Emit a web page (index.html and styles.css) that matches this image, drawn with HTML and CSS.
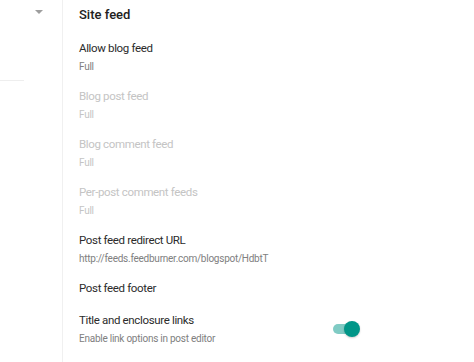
FILE: index.html
```html
<!DOCTYPE html>
<html lang="en">
<head>
    <meta charset="UTF-8">
    <meta name="viewport" content="width=device-width, initial-scale=1.0">
    <title>Settings - Site feed</title>
    <link rel="stylesheet" href="styles.css">
</head>
<body>

<div class="layout">
    <div class="sidebar">
        <div class="nav-head">
            <span class="caret"></span>
        </div>
        <div class="nav-rule"></div>
    </div>

    <div class="content">
        <h2 class="section-title">Site feed</h2>

        <div class="setting">
            <div class="label">Allow blog feed</div>
            <div class="value">Full</div>
        </div>

        <div class="setting disabled">
            <div class="label">Blog post feed</div>
            <div class="value">Full</div>
        </div>

        <div class="setting disabled">
            <div class="label">Blog comment feed</div>
            <div class="value">Full</div>
        </div>

        <div class="setting disabled">
            <div class="label">Per-post comment feeds</div>
            <div class="value">Full</div>
        </div>

        <div class="setting">
            <div class="label">Post feed redirect URL</div>
            <div class="value">http://feeds.feedburner.com/blogspot/HdbtT</div>
        </div>

        <div class="setting single">
            <div class="label">Post feed footer</div>
        </div>

        <div class="setting row">
            <div>
                <div class="label">Title and enclosure links</div>
                <div class="value">Enable link options in post editor</div>
            </div>
            <div class="toggle on"><span class="knob"></span></div>
        </div>
    </div>
</div>

</body>
</html>
```

FILE: styles.css
```css
body { margin: 0; font-family: Roboto, "Noto Sans", Arial, sans-serif; background: #fff; color: #212121; }
.layout { display: flex; height: 362px; overflow: hidden; }
.sidebar { width: 62px; border-right: 1px solid #f0f0f0; flex-shrink: 0; }
.nav-head { height: 24px; display: flex; justify-content: flex-end; align-items: center; padding-right: 19px; }
.caret { width: 0; height: 0; border-left: 4px solid transparent; border-right: 4px solid transparent; border-top: 4px solid #9e9e9e; }
.nav-rule { margin-top: 56px; width: 24px; border-top: 1px solid #eeeeee; }
.content { padding-left: 16px; width: 280px; }
.section-title { font-size: 13px; font-weight: 500; margin: 0; padding-top: 5px; line-height: 20px; margin-bottom: 13px; }
.setting { padding-bottom: 10px; }
.setting.single { padding-bottom: 12px; }
.label { font-size: 11.5px; letter-spacing: -0.35px; line-height: 20px; color: #2b2b2b; }
.value { font-size: 10px; letter-spacing: -0.25px; line-height: 18px; color: #808080; }
.disabled .label, .disabled .value { color: #c4c4c4; }
.row { display: flex; justify-content: space-between; align-items: center; }
.toggle { position: relative; width: 24px; height: 10px; border-radius: 5px; background: #80cbc4; margin-right: 2px; }
.toggle .knob { position: absolute; right: -3px; top: -3px; width: 16px; height: 16px; border-radius: 50%; background: #009688; box-shadow: 0 1px 2px rgba(0,0,0,0.2); }
```
